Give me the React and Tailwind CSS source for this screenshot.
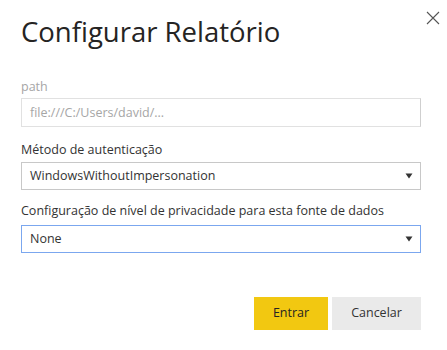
import React from "react";

function Arrow() {
  return (
    <svg width="8" height="6" viewBox="0 0 8 6" className="shrink-0">
      <polygon points="0.5,0.5 7.5,0.5 4,5.5" fill="#333333" />
    </svg>
  );
}

function Select({ value, focused }) {
  return (
    <div
      className={
        "flex h-[28px] w-[400px] items-center justify-between bg-white pl-[8px] pr-[7px] " +
        (focused ? "border border-[#7ba7ef]" : "border border-[#c8c8c8]")
      }
    >
      <span className="text-[12.5px] leading-[16px] text-[#333333]">{value}</span>
      <Arrow />
    </div>
  );
}

export default function App() {
  return (
    <div
      className="relative h-[350px] w-[447px] overflow-hidden bg-white pl-[21px] pt-[18px]"
      style={{ fontFamily: '"Open Sans", "Noto Sans", sans-serif' }}
    >
      <button className="absolute left-[426px] top-[11px] h-[14px] w-[14px]">
        <svg width="14" height="14" viewBox="0 0 14 14">
          <path d="M1 1 L13 13 M13 1 L1 13" stroke="#555555" strokeWidth="1.1" fill="none" />
        </svg>
      </button>

      <h1 className="text-[27.5px] leading-[28px] font-normal text-[#252423]">
        Configurar Relatório
      </h1>

      <div className="mt-[33px] text-[12.5px] leading-[16px] text-[#a6a6a6]">path</div>
      <div className="mt-[3px] flex h-[29px] w-[400px] items-center border border-[#e1e1e1] border-r-[#cfcfcf] pl-[8px]">
        <span className="text-[12.5px] leading-[16px] text-[#a6a6a6]">file:///C:/Users/david/...</span>
      </div>

      <div className="mt-[15px] text-[12.5px] leading-[16px] text-[#333333]">Método de autenticação</div>
      <div className="mt-[4px]">
        <Select value="WindowsWithoutImpersonation" />
      </div>

      <div className="mt-[13px] text-[12.5px] leading-[16px] text-[#333333]">
        Configuração de nível de privacidade para esta fonte de dados
      </div>
      <div className="mt-[6px]">
        <Select value="None" focused />
      </div>

      <div className="mt-[44px] flex w-[400px] justify-end gap-[4px]">
        <button className="h-[33px] w-[74px] bg-[#f2c811] text-[12.5px] text-[#252423]">Entrar</button>
        <button className="h-[33px] w-[89px] bg-[#eaeaea] text-[12.5px] text-[#333333]">Cancelar</button>
      </div>
    </div>
  );
}
